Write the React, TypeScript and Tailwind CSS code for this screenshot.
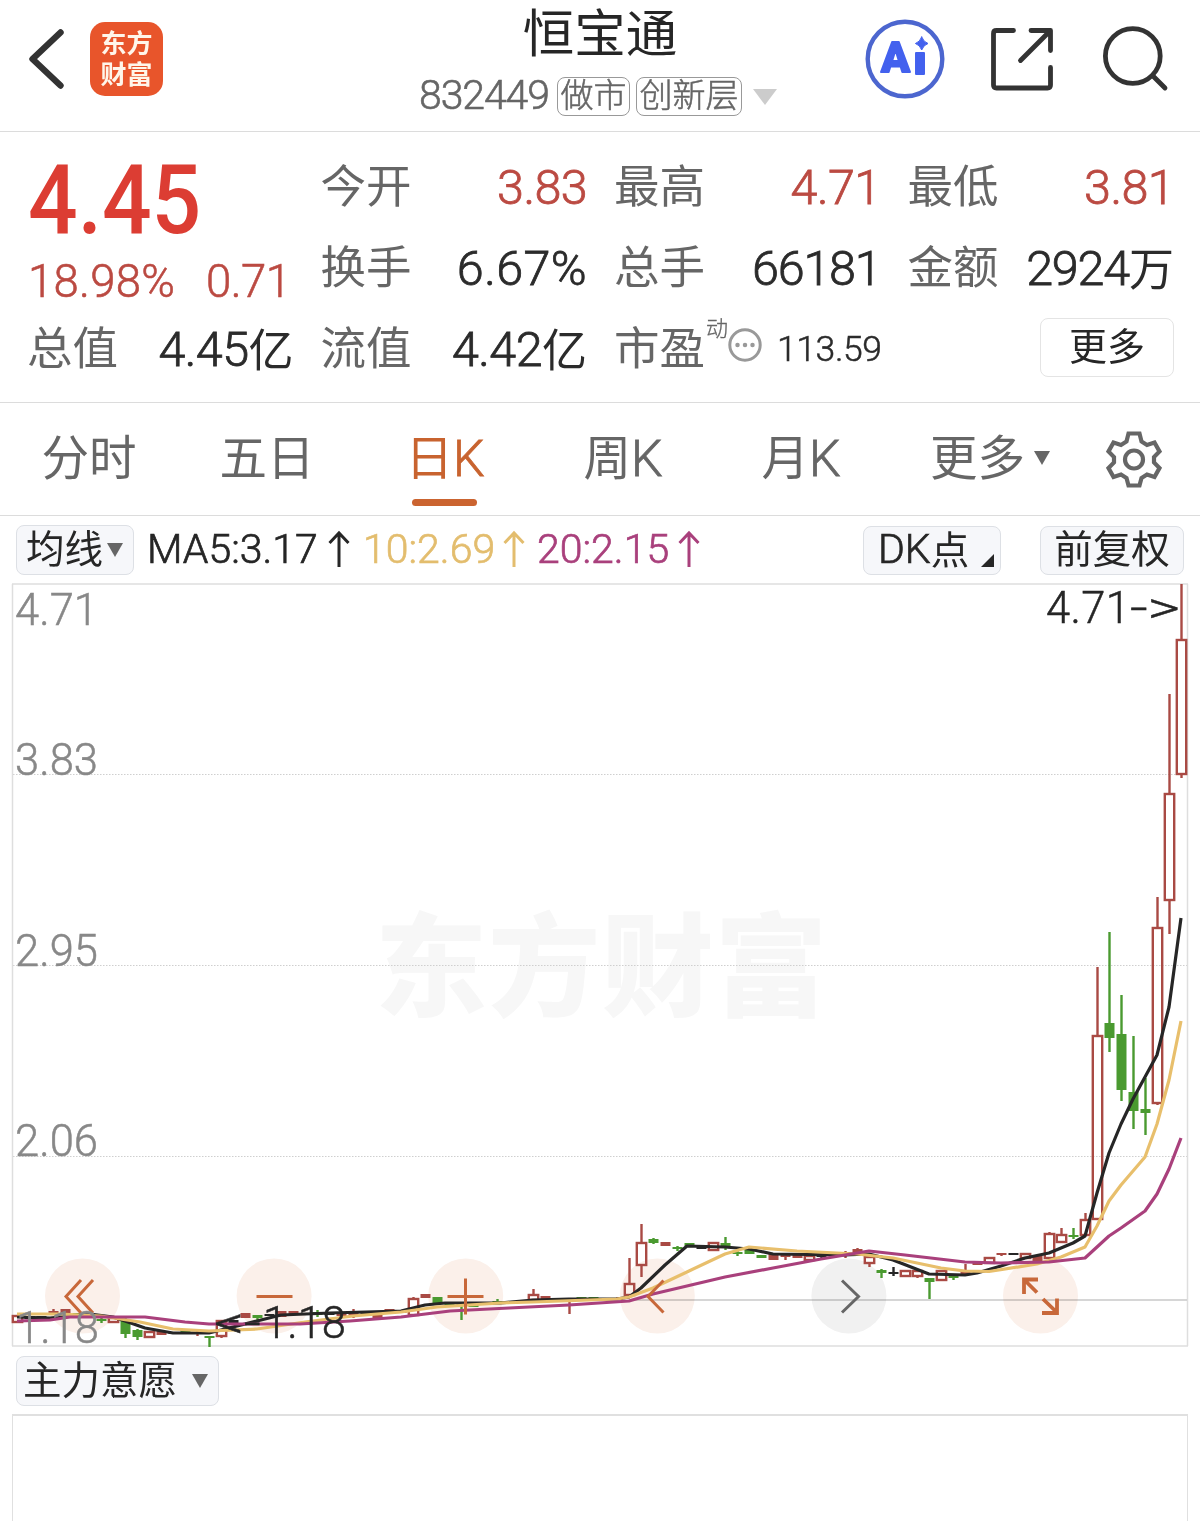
import clsx from 'clsx'
import type { ReactNode } from 'react'

type Kind = 'up' | 'hollow' | 'down' | 'flat'
// [x, kind, high, bodyTop, bodyBottom, low]
type Candle = [number, Kind, number, number, number, number]

const CANDLES: Candle[] = [
  [17.5, 'hollow', 1316, 1316, 1322, 1322],
  [29.5, 'flat', 1317, 1317, 1319, 1319],
  [41.5, 'flat', 1316, 1316, 1318, 1318],
  [53.5, 'up', 1309, 1311, 1313, 1313],
  [65.5, 'up', 1309, 1309, 1314, 1314],
  [77.5, 'down', 1313, 1313, 1315, 1315],
  [89.5, 'flat', 1314, 1314, 1316, 1316],
  [101.5, 'down', 1318, 1319, 1321, 1323],
  [113.5, 'hollow', 1317, 1318, 1322, 1322],
  [125.5, 'down', 1316, 1321, 1334, 1338],
  [137.5, 'down', 1329, 1330, 1337, 1340],
  [149.5, 'hollow', 1331, 1332, 1337, 1337],
  [161.5, 'up', 1331, 1331, 1335, 1335],
  [173.5, 'flat', 1332, 1332, 1334, 1334],
  [185.5, 'down', 1329, 1329, 1332, 1332],
  [197.5, 'up', 1331, 1332, 1334, 1336],
  [209.5, 'down', 1336, 1336, 1338, 1347],
  [221.5, 'hollow', 1321, 1321, 1336, 1338],
  [233.5, 'flat', 1320, 1320, 1323, 1323],
  [245.5, 'up', 1313, 1313, 1318, 1318],
  [257.5, 'down', 1315, 1315, 1318, 1322],
  [269.5, 'flat', 1314, 1314, 1316, 1316],
  [281.5, 'up', 1311, 1311, 1317, 1317],
  [293.5, 'up', 1311, 1311, 1315, 1315],
  [305.5, 'flat', 1313, 1313, 1315, 1315],
  [317.5, 'down', 1310, 1312, 1315, 1317],
  [329.5, 'flat', 1313, 1313, 1315, 1315],
  [341.5, 'up', 1314, 1314, 1316, 1316],
  [353.5, 'up', 1309, 1311, 1316, 1318],
  [365.5, 'flat', 1312, 1312, 1314, 1314],
  [377.5, 'up', 1314, 1315, 1318, 1318],
  [389.5, 'up', 1309, 1309, 1312, 1312],
  [401.5, 'up', 1310, 1311, 1313, 1313],
  [413.5, 'hollow', 1297, 1299, 1315, 1315],
  [425.5, 'up', 1294, 1294, 1298, 1298],
  [437.5, 'down', 1297, 1297, 1303, 1303],
  [449.5, 'down', 1304, 1304, 1306, 1306],
  [461.5, 'down', 1303, 1304, 1306, 1320],
  [473.5, 'down', 1304, 1304, 1307, 1307],
  [485.5, 'up', 1302, 1303, 1304, 1304],
  [497.5, 'down', 1299, 1301, 1303, 1304],
  [509.5, 'flat', 1301, 1302, 1304, 1304],
  [521.5, 'up', 1300, 1300, 1303, 1303],
  [533.5, 'hollow', 1289, 1295, 1300, 1300],
  [545.5, 'up', 1296, 1296, 1299, 1299],
  [557.5, 'flat', 1298, 1298, 1300, 1300],
  [569.5, 'up', 1299, 1299, 1301, 1314],
  [581.5, 'down', 1297, 1297, 1299, 1299],
  [593.5, 'down', 1297, 1297, 1299, 1299],
  [605.5, 'flat', 1298, 1298, 1300, 1300],
  [617.5, 'up', 1297, 1298, 1300, 1300],
  [629.5, 'hollow', 1258, 1284, 1295, 1295],
  [641.5, 'hollow', 1224, 1243, 1265, 1277],
  [653.5, 'down', 1238, 1239, 1243, 1244],
  [665.5, 'up', 1242, 1242, 1246, 1246],
  [677.5, 'down', 1246, 1247, 1249, 1251],
  [689.5, 'down', 1243, 1243, 1246, 1246],
  [701.5, 'flat', 1247, 1247, 1249, 1249],
  [713.5, 'hollow', 1242, 1243, 1250, 1250],
  [725.5, 'down', 1237, 1243, 1248, 1250],
  [737.5, 'down', 1251, 1252, 1254, 1256],
  [749.5, 'down', 1250, 1250, 1254, 1254],
  [761.5, 'down', 1255, 1255, 1258, 1258],
  [773.5, 'up', 1254, 1254, 1260, 1260],
  [785.5, 'up', 1254, 1255, 1257, 1260],
  [797.5, 'up', 1255, 1255, 1258, 1258],
  [809.5, 'hollow', 1255, 1256, 1260, 1261],
  [821.5, 'flat', 1254, 1255, 1257, 1258],
  [833.5, 'down', 1253, 1253, 1255, 1255],
  [845.5, 'up', 1251, 1252, 1254, 1258],
  [857.5, 'up', 1248, 1249, 1253, 1253],
  [869.5, 'hollow', 1256, 1257, 1263, 1267],
  [881.5, 'down', 1269, 1270, 1273, 1278],
  [893.5, 'flat', 1267, 1272, 1274, 1276],
  [905.5, 'hollow', 1271, 1271, 1276, 1276],
  [917.5, 'hollow', 1270, 1271, 1276, 1278],
  [929.5, 'down', 1278, 1278, 1282, 1299],
  [941.5, 'hollow', 1271, 1271, 1280, 1280],
  [953.5, 'down', 1275, 1276, 1278, 1280],
  [965.5, 'up', 1264, 1272, 1275, 1275],
  [977.5, 'up', 1261, 1262, 1265, 1265],
  [989.5, 'hollow', 1257, 1258, 1263, 1263],
  [1001.5, 'up', 1253, 1253, 1255, 1256],
  [1013.5, 'flat', 1253, 1253, 1255, 1255],
  [1025.5, 'hollow', 1253, 1254, 1258, 1258],
  [1037.5, 'up', 1256, 1256, 1262, 1264],
  [1049.5, 'hollow', 1232, 1234, 1258, 1258],
  [1061.5, 'hollow', 1228, 1235, 1242, 1242],
  [1073.5, 'down', 1228, 1235, 1237, 1239],
  [1085.5, 'hollow', 1213, 1220, 1235, 1236],
  [1097.5, 'hollow', 967, 1036, 1219, 1219],
  [1109.5, 'down', 932, 1023, 1038, 1052],
  [1121.5, 'down', 995, 1034, 1090, 1101],
  [1133.5, 'down', 1036, 1092, 1111, 1129],
  [1145.5, 'down', 1078, 1109, 1113, 1135],
  [1157.5, 'hollow', 897, 928, 1103, 1105],
  [1169.5, 'hollow', 694, 794, 900, 934],
  [1181.5, 'hollow', 584, 640, 774, 778],
]

const MA5 =
  '17,1317 50,1318 90,1314 113,1317 125,1321 145,1328 173,1333 209,1333 233,1327 257,1321 281,1315 330,1313 401,1311 425,1305 445,1303 470,1303 500,1303 533,1300 569,1299 617,1299 629,1297 641,1288 665,1265 687,1246 725,1247 749,1249 773,1254 845,1255 869,1254 893,1260 929,1274 965,1275 977,1273 1001,1266 1025,1258 1049,1253 1073,1243 1085,1236 1097,1193 1109,1153 1121,1124 1133,1099 1145,1077 1157,1055 1169,1007 1181,918'
const MA10 =
  '17,1314 60,1314 101,1316 140,1322 173,1329 209,1331 257,1329 305,1322 353,1316 401,1312 437,1307 500,1303 533,1302 617,1299 629,1297 653,1288 689,1271 725,1254 749,1247 797,1251 857,1254 893,1258 941,1268 965,1271 989,1271.5 1037,1264 1061,1257 1085,1247 1097,1226 1109,1201 1121,1185 1145,1157 1157,1124 1169,1080 1181,1021'
const MA20 =
  '17,1321 50,1320 70,1317 145,1317 185,1322 209,1324 300,1324 350,1321 401,1317 450,1311 509,1308 569,1305 629,1301 653,1294 725,1277 773,1268 821,1259 869,1251 905,1255 965,1262 1001,1263 1049,1262 1085,1258 1109,1236 1121,1228 1145,1211 1157,1194 1169,1169 1181,1138'

const COLORS: Record<Kind, string> = {
  up: '#a94a44', hollow: '#a94a44', down: '#4a9a30', flat: '#262626',
}

function Num({ className, children }: { className?: string; children: ReactNode }) {
  return <span className={clsx("font-['Roboto','Noto_Sans_CJK_SC',sans-serif] whitespace-nowrap", className)}>{children}</span>
}

function Down({ className }: { className?: string }) {
  return (
    <svg viewBox="0 0 16 13" preserveAspectRatio="none" className={className}>
      <path d="M0 0H16L8 13Z" fill="currentColor" />
    </svg>
  )
}

function Header() {
  return (
    <header className="flex h-[132px] border-b border-[#dcdcdc]">
      <div className="flex w-[400px] items-start pl-[28px] pt-[22px]">
        <svg width="38" height="74" viewBox="28 22 38 74" fill="none" stroke="#333" strokeWidth="6.4" strokeLinecap="round" strokeLinejoin="round">
          <path d="M60.5 32.5L32.5 59L60.5 85.500" />
        </svg>
        <div className="ml-[24px] flex h-[74px] w-[73px] flex-col items-center justify-center rounded-[15px] bg-[#e8552b] pb-[5px] text-[26px] font-bold leading-[31px] text-[#fff6ea]">
          <span>东方</span>
          <span>财富</span>
        </div>
      </div>
      <div className="flex w-[400px] flex-col items-center">
        <h1 className="mt-[3px] text-[51.5px] font-normal leading-[54px] text-[#262626]">恒宝通</h1>
        <div className="mt-[20px] flex w-full items-center pl-[19px] text-[#666]">
          <Num className="w-[138px] pb-[4px] text-[41px] font-light leading-[34px] tracking-[-1.1px] [-webkit-text-stroke:0.6px]">832449</Num>
          <span className="flex h-[39px] w-[73px] items-center justify-center rounded-[8px] border border-[#999] pb-[6px] text-[33px] font-light leading-none [-webkit-text-stroke:0.5px]">做市</span>
          <span className="ml-[6px] flex h-[39px] w-[106px] items-center justify-center rounded-[8px] border border-[#999] pb-[6px] text-[33px] font-light leading-none [-webkit-text-stroke:0.5px]">创新层</span>
          <Down className="ml-[11px] h-[16px] w-[24px] text-[#ccc]" />
        </div>
      </div>
      <svg width="400" height="130" viewBox="800 0 400 130" fill="none" stroke="#333" strokeWidth="4.8" strokeLinecap="round" strokeLinejoin="round">
        <circle cx="905" cy="59" r="37.3" stroke="#4c66cf" strokeWidth="4.4" />
        <clipPath id="stem">
          <rect x="905" y="52" width="30" height="30" />
        </clipPath>
        <g fill="#4361ee" stroke="#4361ee" strokeWidth="1.8" fontFamily="Roboto, sans-serif" fontWeight="900">
          <text x="881" y="72" fontSize="43" textLength="29" lengthAdjust="spacingAndGlyphs">A</text>
          <text x="913.5" y="74" fontSize="39" textLength="13" lengthAdjust="spacingAndGlyphs" clipPath="url(#stem)">i</text>
        </g>
        <path d="M921.7 37Q923.5 42 928 43.5Q923.5 45 921.7 50Q920 45 915.4 43.5Q920 42 921.7 37Z" fill="#4361ee" stroke="#4361ee" strokeWidth="1" />
        <path d="M1013.5 30.5H996.5Q993.5 30.5 993.5 33.5V85Q993.5 88 996.5 88H1047.5Q1050.5 88 1050.5 85V67.5" />
        <path d="M1031 30.5H1050.5V50.5M1050 31L1020.5 60.5" />
        <circle cx="1132.8" cy="56" r="27.4" />
        <path d="M1153 76L1165 88" />
      </svg>
    </header>
  )
}

type CellProps = { label: string; value: string; unit?: string; tone?: string; spacing?: string }

function Cell({ label, value, unit, tone = 'text-[#2b2b2b]', spacing = 'tracking-[-0.6px]' }: CellProps) {
  return (
    <div className="flex h-[81px] items-center justify-between">
      <span className="-ml-px pb-[7px] text-[45.5px] leading-none text-[#666]">{label}</span>
      <div className={clsx('flex items-center', tone)}>
        <Num className={clsx('pt-[2px] text-[48.5px] font-light leading-none [-webkit-text-stroke:0.8px]', spacing)}>{value}</Num>
        {unit && <span className="pb-[5px] text-[45px] leading-none">{unit}</span>}
      </div>
    </div>
  )
}

function Quote() {
  return (
    <section className="grid h-[271px] auto-rows-[81px] grid-cols-4 gap-x-[28px] border-b border-[#dcdcdc] pl-[28px] pr-[26px] pt-[15px]">
      <div className="row-span-2 flex flex-col">
        <Num className="mt-[2px] w-fit origin-left scale-x-[0.91] text-[96px] font-medium leading-[102px] text-[#dc3d33]">4.45</Num>
        <div className="mt-[4px] flex justify-between pr-[3px] text-[#bb4a42]">
          <Num className="text-[45.5px] font-light leading-[54px] tracking-[0.3px] [-webkit-text-stroke:0.6px]">18.98%</Num>
          <Num className="text-[45.5px] font-light leading-[54px] tracking-[-0.5px] [-webkit-text-stroke:0.6px]">0.71</Num>
        </div>
      </div>
      <Cell label="今开" value="3.83" tone="text-[#bb4a42]" />
      <Cell label="最高" value="4.71" tone="text-[#bb4a42]" />
      <Cell label="最低" value="3.81" tone="text-[#bb4a42]" />
      <Cell label="换手" value="6.67%" spacing="tracking-[0.4px]" />
      <Cell label="总手" value="66181" spacing="tracking-[-1.2px]" />
      <Cell label="金额" value="2924" unit="万" spacing="tracking-[-1.2px]" />
      <Cell label="总值" value="4.45" unit="亿" />
      <Cell label="流值" value="4.42" unit="亿" />
      <div className="flex h-[81px] items-center">
        <span className="-ml-px shrink-0 pb-[7px] text-[45.5px] leading-none text-[#666]">市盈</span>
        <span className="mb-[48px] ml-px shrink-0 text-[22px] font-light leading-none text-[#666] [-webkit-text-stroke:0.3px]">动</span>
        <svg width="34" height="34" viewBox="0 0 34 34" className="mb-[9px] shrink-0">
          <circle cx="17" cy="17" r="15.2" fill="none" stroke="#999" strokeWidth="3" />
          <path d="M9.5 17h.01M17 17h.01M24.5 17h.01" stroke="#999" strokeWidth="4.5" strokeLinecap="round" />
        </svg>
        <Num className="ml-[15px] text-[35.5px] font-light leading-none tracking-[-0.4px] text-[#2b2b2b] [-webkit-text-stroke:0.5px]">113.59</Num>
      </div>
      <div className="flex h-[81px] items-center justify-end pb-[4px]">
        <button className="flex h-[59px] w-[134px] items-center justify-center rounded-[8px] border-[1.5px] border-[#e4e4e4] pb-[8px] text-[38px] leading-none text-[#262626]">更多</button>
      </div>
    </section>
  )
}

function Tabs() {
  const tabs = [['分时', ''], ['五日', ''], ['日', 'K'], ['周', 'K'], ['月', 'K']]
  return (
    <nav className="flex h-[113px] border-b border-[#dcdcdc] text-[47.5px] text-[#666]">
      {tabs.map(([cjk, latin]) => {
        const active = cjk === '日'
        return (
          <div key={cjk} className={clsx('flex w-[178px] flex-col items-center', active && 'text-[#c8632f]')}>
            <div className="mt-[22px] flex h-[60px] items-center">
              <span className="leading-none">{cjk}</span>
              {latin && <Num className="pt-[8px] text-[50px] font-light leading-none [-webkit-text-stroke:0.8px]">{latin}</Num>}
            </div>
            {active && <div className="-ml-[2px] mt-[14px] h-[7px] w-[65px] rounded-full bg-[#cb6430]" />}
          </div>
        )
      })}
      <div className="mt-[22px] flex h-[60px] w-[200px] items-center justify-center">
        <span className="leading-none">更多</span>
        <Down className="ml-[9px] mt-[6px] h-[14px] w-[16px]" />
      </div>
      <svg width="60" height="60" viewBox="1104 430 60 60" className="ml-[14px] mt-[27px]" fill="none" stroke="#666" strokeWidth="4.2" strokeLinejoin="miter">
        <path d="M1128.5 433.5H1139.5L1141.5 441.5L1147 445L1154.5 442.5L1159.5 451.5L1154 457V462.5L1159.5 468L1154.5 477L1147 474.5L1141.5 478L1139.5 485.5H1128.5L1126.5 478L1121 474.5L1113.5 477L1108.5 468L1114 462.5V457L1108.5 451.5L1113.5 442.5L1121 445L1126.5 441.5Z" />
        <circle cx="1134" cy="459.5" r="9" />
      </svg>
    </nav>
  )
}

function Ma({ text, className }: { text: string; className: string }) {
  return (
    <div className={clsx('flex items-center', className)}>
      <Num className="text-[41px] font-light leading-none [-webkit-text-stroke:0.7px]">{text}</Num>
      <svg width="22" height="38" viewBox="0 0 22 38" className="ml-auto" fill="none" stroke="currentColor" strokeWidth="3">
        <path d="M11 37V4M1.5 13L11 3L20.5 13" />
      </svg>
    </div>
  )
}

const CHIP = 'flex items-center rounded-[8px] border border-[#dde0e5] bg-[#f6f7fa] leading-none text-[#262626]'

function Indicators() {
  return (
    <div className="flex h-[68px] items-start pl-[16px] pr-[16px] pt-[9px]">
      <div className={clsx(CHIP, 'h-[50px] w-[118px] pl-[9px] text-[38.5px]')}>
        <span className="pb-[7px]">均线</span>
        <Down className="ml-[4px] h-[14px] w-[16px] text-[#666]" />
      </div>
      <div className="ml-[13px] flex h-[48px] items-center">
        <Ma text="MA5:3.17" className="w-[203px] text-[#262626]" />
        <Ma text="10:2.69" className="ml-[13px] w-[162px] text-[#e3bd6e]" />
        <Ma text="20:2.15" className="ml-[12px] w-[163px] text-[#a9407c]" />
      </div>
      <div className={clsx(CHIP, 'relative ml-auto mt-px h-[49px] w-[138px] pl-[14px]')}>
        <Num className="pb-[3px] text-[41px] font-light [-webkit-text-stroke:0.7px]">DK</Num>
        <span className="pb-[7px] text-[38.5px]">点</span>
        <svg width="13" height="13" viewBox="0 0 13 13" className="absolute bottom-[7px] right-[6px]">
          <path d="M13 0V13H0Z" fill="#262626" />
        </svg>
      </div>
      <div className={clsx(CHIP, 'ml-[39px] mt-px h-[49px] w-[144px] justify-center pb-[8px] text-[38.5px]')}>前复权</div>
    </div>
  )
}

function CandleMark({ data: [x, kind, high, top, bottom, low] }: { data: Candle }) {
  const c = COLORS[kind]
  return (
    <g stroke={c} strokeWidth="2.4">
      {high < top && <path d={`M${x} ${high}V${top}`} />}
      {low > bottom && <path d={`M${x} ${bottom}V${low}`} />}
      {kind === 'hollow'
        ? <rect x={x - 4.7} y={top} width="9.4" height={bottom - top} fill="none" />
        : <rect x={x - 5} y={top} width="10" height={bottom - top} fill={c} stroke="none" />}
    </g>
  )
}

const CONTROLS = [
  'M81 1280L66 1296.5L81 1313M93 1280L78 1296.5L93 1313',
  'M256.5 1296.5H292.5',
  'M447.5 1296.5H483.5M465.5 1278.5V1314.5',
  'M663.5 1280.5L648 1296.5L663.5 1312.5',
  'M842 1280.5L858.5 1296.5L842 1312.5',
  'M1038 1279.5H1024V1294M1024.5 1280L1037 1292.5M1043 1299L1057 1312.5M1057 1298.5V1313H1042',
]

function Chart() {
  return (
    <svg width="1200" height="765" viewBox="0 583 1200 765" className="block overflow-visible" fill="none">
      <text x="375" y="1008" fontSize="112" fontWeight="900" fill="#f7f7f7" textLength="452" fontFamily="'Noto Sans CJK SC', sans-serif">东方财富</text>
      <path d="M13 774.5H1187M13 965.5H1187M13 1156.5H1187" stroke="#cfcfcf" strokeDasharray="1.5 1.5" />
      <path d="M12.5 584V1346M1187.5 584V1346" stroke="#dedede" strokeWidth="1.5" />
      <path d="M12 584H1188M12 1346H1188" stroke="#dedede" strokeWidth="1.6" />
      <path d="M630 1300H1187" stroke="#c8c8c8" strokeWidth="1.6" />
      {CONTROLS.map((d, i) => (
        <circle key={d} cx={82.5 + i * 191.6} cy="1296" r="37.5" fill={i === 4 ? '#f1f1f1' : '#fbf0ea'} style={{ mixBlendMode: 'multiply' }} />
      ))}
      {CANDLES.map(c => <CandleMark key={c[0]} data={c} />)}
      <g strokeWidth="3.2" strokeLinejoin="round">
        <polyline points={MA5} stroke="#262626" />
        <polyline points={MA10} stroke="#e8bf6c" />
        <polyline points={MA20} stroke="#a9407c" />
      </g>
      {CONTROLS.map((d, i) => (
        <path key={d} d={d} stroke={i === 4 ? '#666' : '#c8683a'} strokeWidth={i === 5 ? 3.8 : 3} />
      ))}
      <g fontFamily="Roboto, sans-serif" fontSize="43.5" fontWeight="300" fill="#888" stroke="#888" strokeWidth="0.5">
        <text x="15" y="624.5" textLength="83">4.71</text>
        <text x="15" y="775" textLength="83">3.83</text>
        <text x="15" y="966" textLength="83">2.95</text>
        <text x="15" y="1156" textLength="83">2.06</text>
        <text x="16" y="1343" textLength="83">1.18</text>
        <g fill="#262626" stroke="#262626">
          <text x="1046" y="623" textLength="84">4.71</text>
          <text x="1130" y="623" textLength="50" lengthAdjust="spacingAndGlyphs">-&gt;</text>
          <text x="214" y="1338" textLength="47" lengthAdjust="spacingAndGlyphs">&lt;-</text>
          <text x="263" y="1338" textLength="83">1.18</text>
        </g>
      </g>
    </svg>
  )
}

export default function App() {
  return (
    <div className="flex h-[1521px] w-[1200px] flex-col overflow-hidden bg-white font-['Noto_Sans_CJK_SC',sans-serif]">
      <Header />
      <Quote />
      <Tabs />
      <Indicators />
      <div className="-mt-px shrink-0">
        <Chart />
      </div>
      <div className="flex h-[66px] shrink-0 items-start pl-[16px] pt-[8px]">
        <div className={clsx(CHIP, 'h-[50px] w-[203px] pl-[6px] text-[38.5px]')}>
          <span className="pb-[7px]">主力意愿</span>
          <Down className="ml-[15px] h-[14px] w-[16px] text-[#666]" />
        </div>
      </div>
      <div className="ml-[12px] mr-[12px] flex-1 border-x border-t-2 border-[#e0e0e0]" />
    </div>
  )
}
